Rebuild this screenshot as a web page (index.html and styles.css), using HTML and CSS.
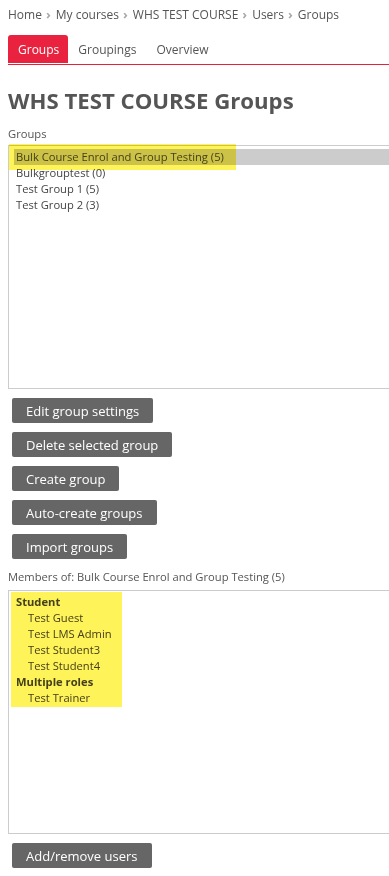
FILE: index.html
```html
<!DOCTYPE html>
<html lang="en">
<head>
<meta charset="utf-8">
<title>WHS TEST COURSE Groups</title>
<link rel="stylesheet" href="styles.css">
</head>
<body>
<nav class="breadcrumb">
  <a href="#">Home</a><span class="sep">&#x203A;</span>
  <a href="#">My courses</a><span class="sep">&#x203A;</span>
  <a href="#">WHS TEST COURSE</a><span class="sep">&#x203A;</span>
  <a href="#">Users</a><span class="sep">&#x203A;</span>
  <span>Groups</span>
</nav>
<ul class="tabs">
  <li class="tab active">Groups</li>
  <li class="tab">Groupings</li>
  <li class="tab">Overview</li>
</ul>
<h1 class="title">WHS TEST COURSE Groups</h1>
<div class="label">Groups</div>
<div class="listbox groups">
  <div class="opt selected">Bulk Course Enrol and Group Testing (5)</div>
  <div class="opt">Bulkgrouptest (0)</div>
  <div class="opt">Test Group 1 (5)</div>
  <div class="opt">Test Group 2 (3)</div>
  <div class="hl hl-groups"></div>
</div>
<div class="buttons">
  <button class="btn">Edit group settings</button>
  <button class="btn">Delete selected group</button>
  <button class="btn">Create group</button>
  <button class="btn">Auto-create groups</button>
  <button class="btn">Import groups</button>
</div>
<div class="label members-label">Members of: Bulk Course Enrol and Group Testing (5)</div>
<div class="listbox members">
  <div class="optgroup">Student</div>
  <div class="opt indent">Test Guest</div>
  <div class="opt indent">Test LMS Admin</div>
  <div class="opt indent">Test Student3</div>
  <div class="opt indent">Test Student4</div>
  <div class="optgroup">Multiple roles</div>
  <div class="opt indent">Test Trainer</div>
  <div class="hl hl-members"></div>
</div>
<div class="buttons last">
  <button class="btn">Add/remove users</button>
</div>
</body>
</html>
```
FILE: styles.css
```css
html, body {
  margin: 0;
  padding: 0;
  background: #fff;
  overflow: hidden;
}
body {
  padding: 0 0 0 8px;
  font-family: "Open Sans", "DejaVu Sans", sans-serif;
  color: #444;
}
.breadcrumb {
  height: 28px;
  display: flex;
  align-items: center;
  font-size: 12px;
  color: #555;
  white-space: nowrap;
}
.breadcrumb a {
  color: #555;
  text-decoration: none;
}
.breadcrumb .sep {
  color: #aaa;
  margin: 0 5px 0 4px;
  font-size: 13px;
  font-weight: 700;
}
.tabs {
  list-style: none;
  margin: 7px 0 0;
  padding: 0;
  display: flex;
  border-bottom: 1px solid #e0243c;
  height: 29px;
}
.tab {
  height: 28px;
  display: flex;
  align-items: center;
  padding: 0 10px;
  font-size: 12px;
  color: #555;
  border-radius: 3px 3px 0 0;
}
.tab.active {
  background: #e8223f;
  color: #fff;
  padding: 0 9px 0 10px;
}
.title {
  margin: 21px 0 0;
  font-size: 22.2px;
  font-weight: 700;
  color: #555;
  line-height: 30px;
}
.label {
  margin-top: 10px;
  font-size: 11.2px;
  color: #555;
  line-height: 16px;
}
.listbox {
  position: relative;
  margin-top: 3px;
  margin-right: -20px;
  border: 1px solid #ccc;
  padding: 3px 0 0 5px;
  box-sizing: border-box;
  font-size: 11.2px;
  color: #444;
}
.groups {
  height: 244px;
}
.opt {
  line-height: 16px;
  padding-left: 2px;
  white-space: nowrap;
}
.opt.selected {
  background: #cccccc;
}
.optgroup {
  line-height: 16px;
  padding-left: 2px;
  font-weight: 700;
}
.opt.indent {
  padding-left: 14px;
}
.hl {
  position: absolute;
  background: #fff35a;
  mix-blend-mode: multiply;
  pointer-events: none;
}
.hl-groups {
  left: 0;
  top: -2px;
  width: 227px;
  height: 26px;
}
.hl-members {
  left: 2px;
  top: 1px;
  width: 111px;
  height: 115px;
}
.buttons {
  display: flex;
  flex-direction: column;
  align-items: flex-start;
  gap: 9px;
  margin-top: 9px;
  padding-left: 4px;
}
.btn {
  height: 25px;
  padding: 0 14px;
  border: 0;
  border-radius: 2px;
  background: #666;
  color: #fff;
  font-family: "Open Sans", "DejaVu Sans", sans-serif;
  font-size: 13px;
}
.members-label {
  margin-top: 10px;
}
.members {
  height: 244px;
  margin-top: 5px;
}
.buttons.last {
  margin-top: 9px;
}
```
